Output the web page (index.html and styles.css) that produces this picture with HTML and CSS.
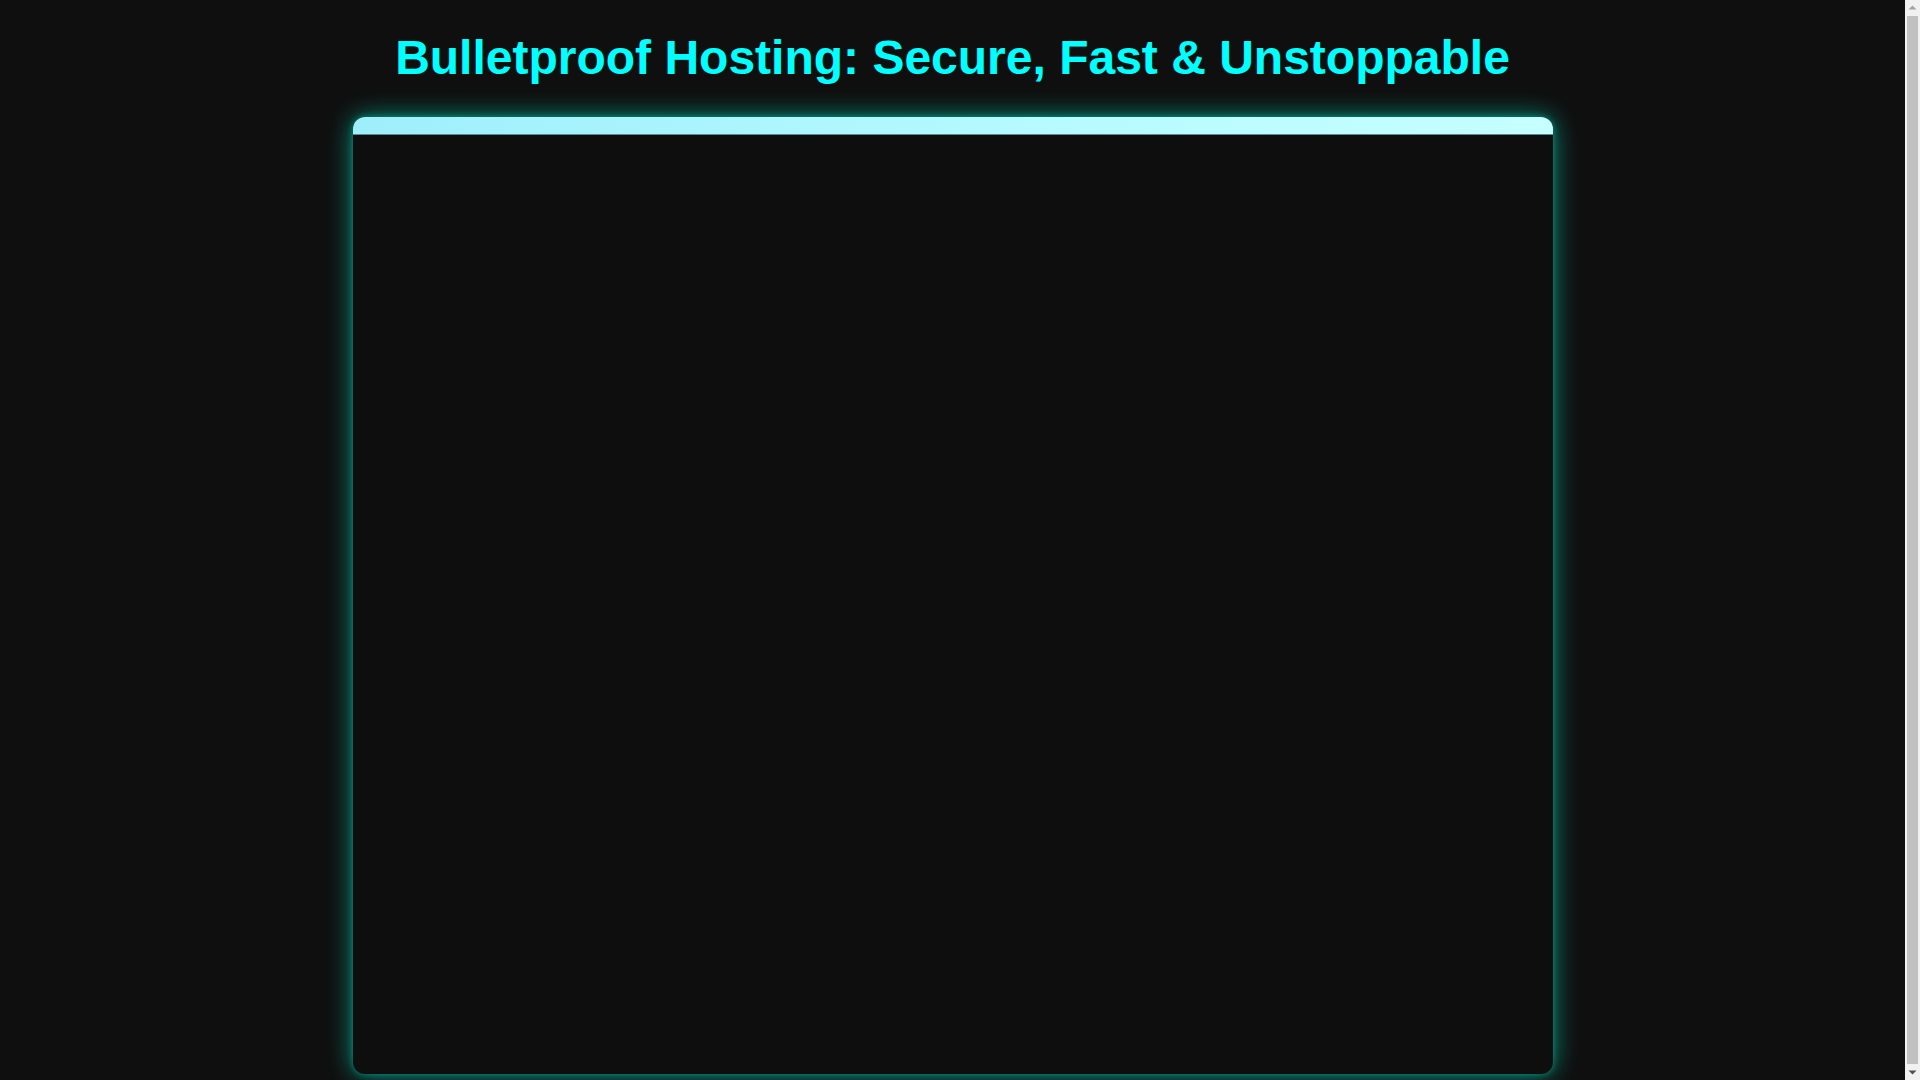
FILE: index.html
```html
<!DOCTYPE html>
<html lang="en">
<head>
<meta charset="utf-8">
<title>Bulletproof Hosting</title>
<link rel="stylesheet" href="styles.css">
</head>
<body>
  <h1 class="title">Bulletproof Hosting: Secure, Fast &amp; Unstoppable</h1>
  <div class="card">
    <div class="card-bar"></div>
    <div class="card-body"></div>
  </div>
  <div class="scrollbar" aria-hidden="true">
    <div class="sb-btn">
      <svg width="15" height="15" viewBox="0 0 15 15"><polygon points="3.5,9.5 11.5,9.5 7.5,5.5" fill="#a3a3a3"/></svg>
    </div>
    <div class="sb-track"><div class="sb-thumb"></div></div>
    <div class="sb-btn">
      <svg width="15" height="15" viewBox="0 0 15 15"><polygon points="3.5,5.5 11.5,5.5 7.5,9.5" fill="#505050"/></svg>
    </div>
  </div>
</body>
</html>
```
FILE: styles.css
```css
html {
  background: #0f0f0f;
}
body {
  margin: 0;
  padding: 20px 35px 10px 20px;
  background: #0f0f0f;
  font-family: "Liberation Sans", Arial, sans-serif;
}
.title {
  margin: 10px 0 32px;
  text-align: center;
  font-size: 48px;
  font-weight: bold;
  color: #00ffff;
}
.card {
  max-width: 1200px;
  margin: 0 auto;
  height: 957px;
  border-radius: 12px;
  background: #0e0e0e;
  box-shadow: 0 0 26px rgba(0, 220, 190, 0.65), 0 0 6px rgba(0, 190, 160, 0.5);
  overflow: hidden;
  display: flex;
  flex-direction: column;
}
.card-bar {
  height: 17px;
  flex: none;
  background: linear-gradient(90deg, #9eeffb 0%, #b6fbff 60%, #c6ffff 100%);
  border-bottom: 1px solid #5e8a8c;
}
.card-body {
  flex: 1;
}
.scrollbar {
  position: fixed;
  top: 0;
  right: 0;
  width: 15px;
  height: 100vh;
  background: #f1f1f1;
  display: flex;
  flex-direction: column;
}
.sb-btn {
  height: 15px;
  flex: none;
}
.sb-btn svg {
  display: block;
}
.sb-track {
  flex: 1;
  padding: 1px 2px;
  display: flex;
}
.sb-thumb {
  flex: 1;
  background: #c1c1c1;
}
```
